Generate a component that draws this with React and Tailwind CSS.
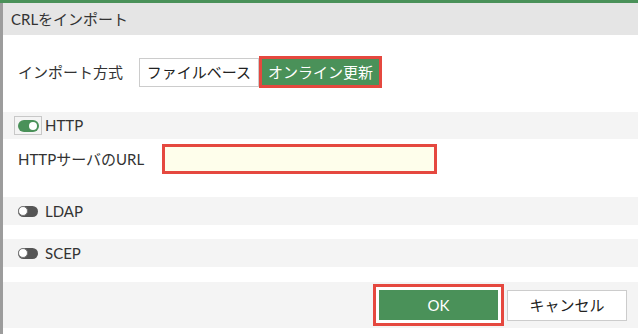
import React, { useState } from "react";

const font = { fontFamily: "Lato, 'Noto Sans CJK JP', sans-serif" };

const Toggle = ({ on, focus }) => {
    const pill = on ? (
        <span className="flex items-center justify-end w-[21px] h-[12px] rounded-full bg-[#4a9159] px-[2px]">
            <span className="w-[8px] h-[8px] rounded-full bg-white"></span>
        </span>
    ) : (
        <span className="flex items-center justify-start w-[20px] h-[11px] rounded-full bg-[#555555]">
            <span className="w-[10px] h-[10px] rounded-full bg-white border border-[#777777]"></span>
        </span>
    );
    return focus ? (
        <span className="flex items-center justify-center w-[28px] h-[19px] border border-[#c8c8c8] bg-[#f4f4f4]">{pill}</span>
    ) : (
        <span className="flex items-center justify-center w-[28px] h-[19px]">{pill}</span>
    );
};

const SectionRow = ({ label, on, focus, height }) => (
    <div className={`flex items-center gap-[3px] bg-[#f4f4f4] pl-[11px] ${height}`}>
        <Toggle on={on} focus={focus} />
        <span className="text-[15px] text-[#333333]">{label}</span>
    </div>
);

export default function App() {
    const [mode, setMode] = useState("online");
    const [url, setUrl] = useState("");

    return (
        <div className="w-[638px] h-[334px] flex flex-col bg-white overflow-hidden" style={font}>
            <div className="h-[3px] bg-[#4a9159]"></div>
            <div className="flex flex-1">
                <div className="w-[3px] bg-[#9c9c9c]"></div>
                <div className="flex-1 flex flex-col">
                    {/* header */}
                    <div className="h-[32px] flex items-center bg-[#e5e5e5] pl-[8px] text-[15px] text-[#333333]">
                        CRLをインポート
                    </div>

                    {/* import mode */}
                    <div className="mt-[21px] h-[32px] flex items-center pl-[15px]">
                        <span className="w-[121px] text-[15px] text-[#333333]">インポート方式</span>
                        <button
                            className="h-[29px] w-[120px] border border-[#cccccc] bg-white text-[15px] text-[#222222]"
                            onClick={() => setMode("file")}
                        >
                            ファイルベース
                        </button>
                        <button
                            className="h-[32px] w-[123px] border-[3px] border-[#e5483f] bg-[#4a9159] text-[15px] text-white"
                            onClick={() => setMode("online")}
                        >
                            オンライン更新
                        </button>
                    </div>

                    {/* HTTP */}
                    <div className="mt-[24px]">
                        <SectionRow label="HTTP" on={true} focus={true} height="h-[27px]" />
                    </div>
                    <div className="mt-[5px] h-[30px] flex items-center pl-[15px]">
                        <span className="w-[144px] text-[15px] text-[#333333]">HTTPサーバのURL</span>
                        <input
                            className="h-[30px] w-[275px] border-[3px] border-[#e5483f] bg-[#fefeeb] outline-none px-2 text-[14px]"
                            value={url}
                            onChange={(e) => setUrl(e.target.value)}
                        />
                    </div>

                    {/* LDAP / SCEP */}
                    <div className="mt-[23px]">
                        <SectionRow label="LDAP" on={false} height="h-[28px]" />
                    </div>
                    <div className="mt-[14px]">
                        <SectionRow label="SCEP" on={false} height="h-[28px]" />
                    </div>

                    {/* footer */}
                    <div className="mt-[15px] h-[46px] flex items-center justify-end gap-[3px] bg-[#f4f4f4] pr-[11px]">
                        <div className="border-[3px] border-[#e5483f] bg-white p-[3px]">
                            <button className="h-[30px] w-[119px] bg-[#4a9159] text-[15px] text-white">OK</button>
                        </div>
                        <button className="h-[31px] w-[120px] border border-[#cccccc] bg-white text-[15px] text-[#222222]">
                            キャンセル
                        </button>
                    </div>
                </div>
            </div>
        </div>
    );
}
